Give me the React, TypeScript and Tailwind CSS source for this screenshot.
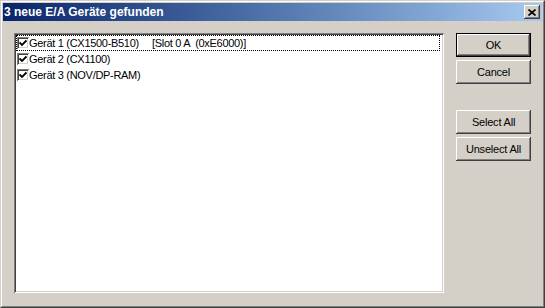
const FONT = "font-['Liberation_Sans',Arial,sans-serif]";

const devices = [
  { name: "Gerät 1 (CX1500-B510)", slot: "[Slot 0 A  (0xE6000)]" },
  { name: "Gerät 2 (CX1100)", slot: "" },
  { name: "Gerät 3 (NOV/DP-RAM)", slot: "" },
];

function CheckBox() {
  return (
    <span className="flex h-[12px] w-[12px] shrink-0 items-center justify-center bg-white shadow-[inset_1px_1px_#808080,inset_-1px_-1px_#fff,inset_2px_2px_#404040,inset_-2px_-2px_#d4d0c8]">
      <svg width="8" height="8" viewBox="0 0 8 8">
        <path d="M0.5 3.5 L3 6 L7.5 1.5" stroke="#000" strokeWidth="1.8" fill="none" />
      </svg>
    </span>
  );
}

function Button({ label, primary }: { label: string; primary?: boolean }) {
  return (
    <button
      className={
        "flex h-[24px] w-[75px] items-center justify-center bg-[#d4d0c8] text-[11px] tracking-[-0.2px] text-black " +
        (primary
          ? "border border-black shadow-[inset_-1px_-1px_#404040,inset_1px_1px_#fff,inset_-2px_-2px_#808080]"
          : "shadow-[inset_-1px_-1px_#404040,inset_1px_1px_#fff,inset_-2px_-2px_#808080]")
      }
    >
      {label}
    </button>
  );
}

export default function App() {
  return (
    <div className={`h-[308px] w-[545px] border border-t-[#d4d0c8] border-l-[#d4d0c8] border-b-[#404040] border-r-[#404040] ${FONT}`}>
      <div className="flex h-full flex-col border border-t-white border-l-white border-b-[#808080] border-r-[#808080] bg-[#d4d0c8] p-px">
        <div className="flex h-[18px] items-center justify-between bg-linear-to-r from-[#0a246a] to-[#a6caf0] pl-[1px] pr-[2px]">
          <span className="text-[12px] font-bold text-white">3 neue E/A Geräte gefunden</span>
          <button className="flex h-[14px] w-[16px] items-center justify-center bg-[#d4d0c8] shadow-[inset_-1px_-1px_#404040,inset_1px_1px_#fff,inset_-2px_-2px_#808080]">
            <svg width="8" height="7" viewBox="0 0 8 7">
              <path d="M0.5 0.5 L7.5 6.5 M7.5 0.5 L0.5 6.5" stroke="#000" strokeWidth="1.6" />
            </svg>
          </button>
        </div>

        <div className="flex pl-[11px] pt-[12px]">
          <div className="h-[260px] w-[430px] bg-white p-[2px] shadow-[inset_1px_1px_#808080,inset_-1px_-1px_#fff,inset_2px_2px_#404040,inset_-2px_-2px_#d4d0c8]">
            {devices.map((d, i) => (
              <div
                key={d.name}
                className={
                  "flex h-[16px] w-[424px] items-center text-[11px] tracking-[-0.3px] text-black " +
                  (i === 0 ? "border border-dotted border-black" : "border border-transparent")
                }
              >
                <CheckBox />
                <span className="w-[123px] whitespace-pre">{d.name}</span>
                <span className="whitespace-pre">{d.slot}</span>
              </div>
            ))}
          </div>

          <div className="ml-[12px] flex flex-col">
            <Button label="OK" primary />
            <div className="mt-[3px]">
              <Button label="Cancel" />
            </div>
            <div className="mt-[26px]">
              <Button label="Select All" />
            </div>
            <div className="mt-[3px]">
              <Button label="Unselect All" />
            </div>
          </div>
        </div>
      </div>
    </div>
  );
}
